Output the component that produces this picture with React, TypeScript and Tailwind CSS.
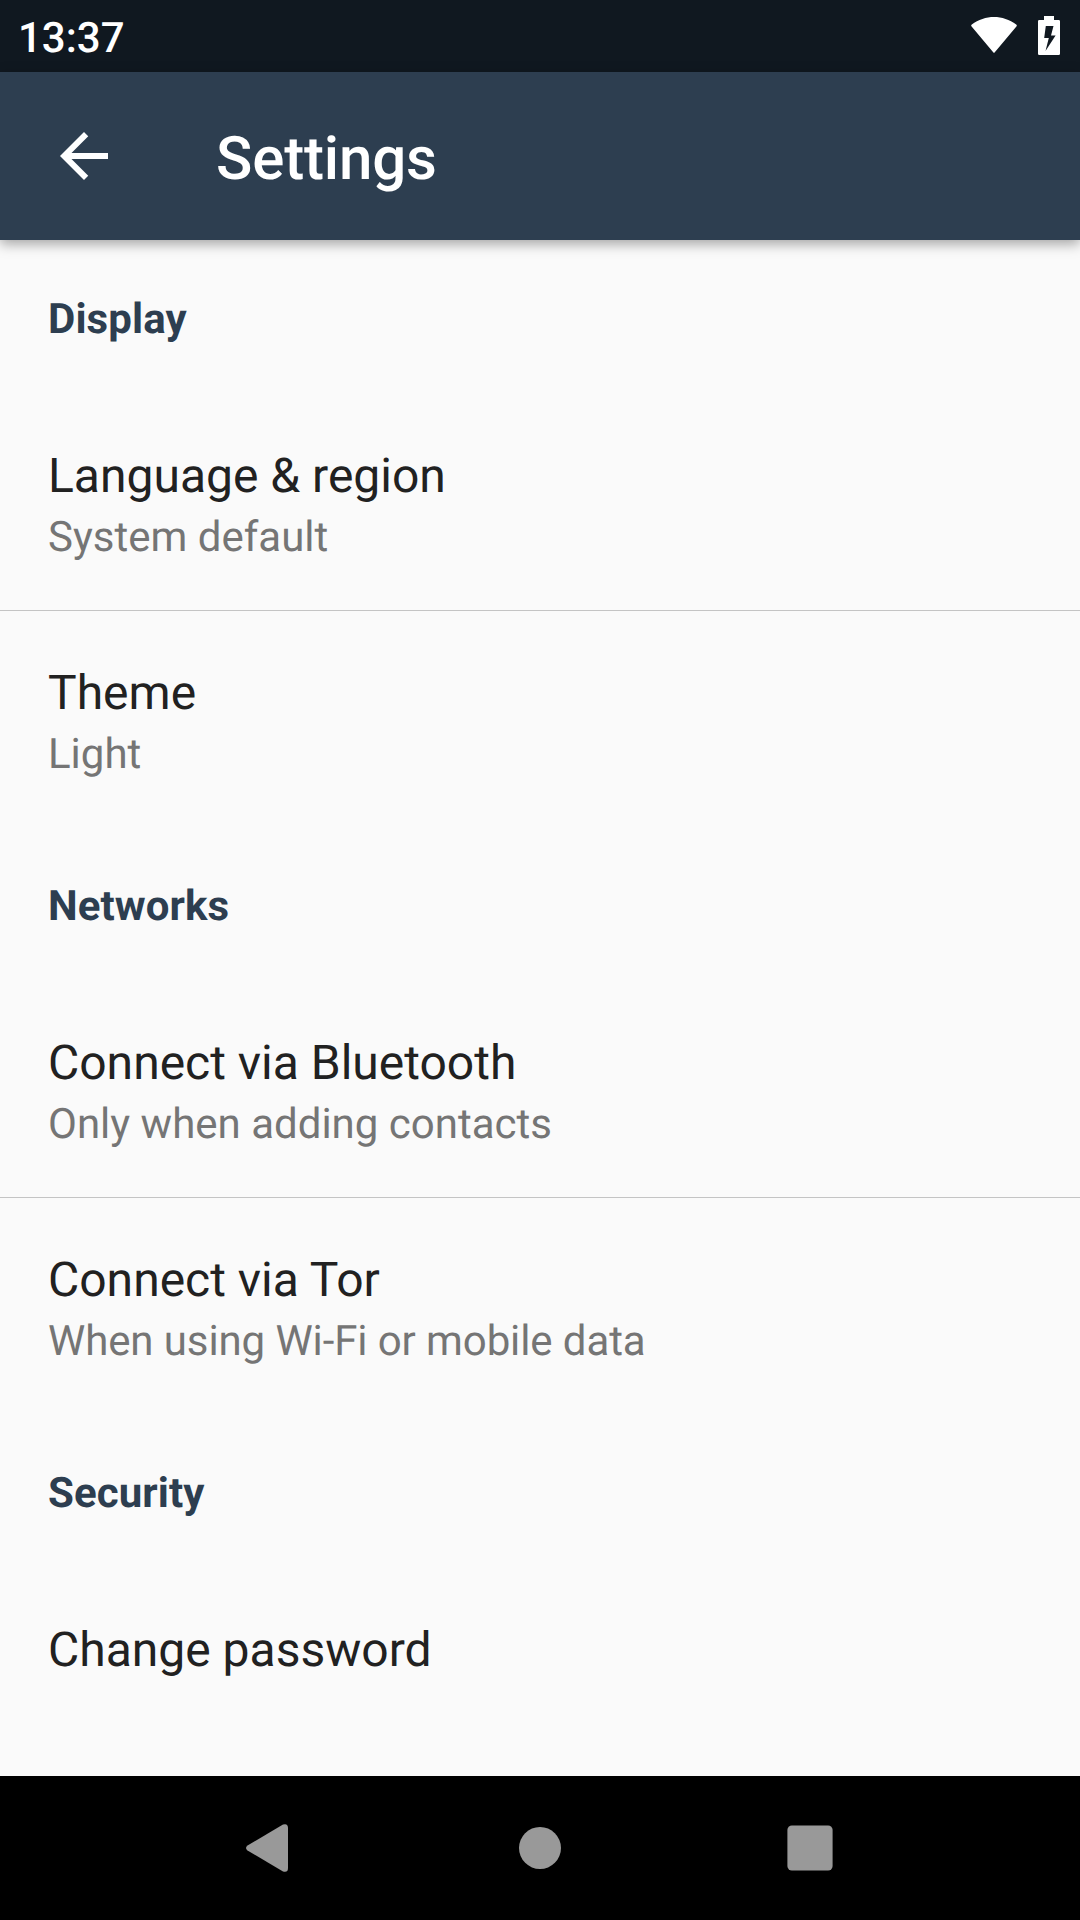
import React from "react";

function Section({ title }: { title: string }) {
  return (
    <h2 className="flex h-[154px] shrink-0 items-center pl-12 pt-[4px] text-[42px] font-bold leading-[49px] tracking-[0.1px] text-[#2d3e50]">
      {title}
    </h2>
  );
}

function Item({
  title,
  summary,
  divider = false,
  summaryClass = "",
}: {
  title: string;
  summary?: string;
  divider?: boolean;
  summaryClass?: string;
}) {
  return (
    <div className={`flex shrink-0 flex-col pl-12 pt-[54px] ${divider ? "h-[217px] border-b border-[#c4c4c4]" : summary ? "h-[216px]" : "h-[153px]"}`}>
      <div className="text-[48px] leading-[56px] text-[#212121]">{title}</div>
      {summary && <div className={`mt-[5px] text-[42px] leading-[57px] text-[#757575] ${summaryClass}`}>{summary}</div>}
    </div>
  );
}

export default function App() {
  return (
    <div className="flex h-[1920px] w-[1080px] flex-col overflow-hidden bg-[#fafafa] font-['Roboto',sans-serif] [text-rendering:geometricPrecision]">
      <div className="flex h-[72px] shrink-0 items-center justify-between bg-[#101820] pl-[18px] pr-5 text-white">
        <span className="pt-[4px] text-[42px] font-medium leading-[49px]">13:37</span>
        <div className="flex items-start gap-[21px] self-start pt-4">
          <svg className="mt-px" width="46" height="36" viewBox="0 0 46 36" fill="white"><path d="M.4 9.2Q-.2 8.2 .8 7.5C14 -2.5 32 -2.5 45.2 7.5Q46.2 8.2 45.6 9.2L23.8 35.2Q23 36.2 22.2 35.2Z" /></svg>
          <svg width="22" height="39" viewBox="0 0 22 39" fill="white"><path fillRule="evenodd" d="M6 0h10v4h4.7q1.3 0 1.3 1.3v32.4q0 1.3-1.3 1.3H1.3q-1.3 0-1.3-1.3V5.3q0-1.3 1.3-1.3H6ZM7.8 10L6.2 22H10.8L7.5 35L17.6 19.5H13L15.5 10Z" /></svg>
        </div>
      </div>
      <header className="z-10 flex h-[168px] shrink-0 items-center bg-[#2d3e50] pl-[60px] text-white shadow-[0_4px_12px_rgba(0,0,0,0.35)]">
        <svg width="48" height="48" viewBox="4 4 16 16" fill="white"><path d="M20 11H7.83l5.59-5.59L12 4l-8 8 8 8 1.41-1.41L7.83 13H20v-2z" /></svg>
        <h1 className="ml-[108px] pt-[6px] text-[60px] font-medium leading-[70px] tracking-[-0.15px]">Settings</h1>
      </header>
      <main className="flex min-h-0 flex-1 flex-col">
        <Section title="Display" />
        <Item title="Language & region" summary="System default" divider />
        <Item title="Theme" summary="Light" />
        <Section title="Networks" />
        <Item title="Connect via Bluetooth" summary="Only when adding contacts" divider />
        <Item title="Connect via Tor" summary="When using Wi-Fi or mobile data" summaryClass="tracking-[-0.1px]" />
        <Section title="Security" />
        <Item title="Change password" />
      </main>
      <nav className="flex h-[144px] shrink-0 items-center justify-between bg-black pl-[246px] pr-[247px]">
        <svg width="42" height="48" viewBox="0 0 42 48" fill="#999"><path d="M37 .5Q42-1 42 4V44Q42 49 37 47.5L1.5 26.5Q-1.5 24 1.5 21.5Z" /></svg>
        <svg className="ml-[5px]" width="42" height="42" viewBox="0 0 42 42" fill="#999"><circle cx="21" cy="21" r="21" /></svg>
        <svg width="46" height="46" viewBox="0 0 46 46" fill="#999"><rect x=".4" y=".4" width="45.2" height="45.2" rx="4.5" /></svg>
      </nav>
    </div>
  );
}
